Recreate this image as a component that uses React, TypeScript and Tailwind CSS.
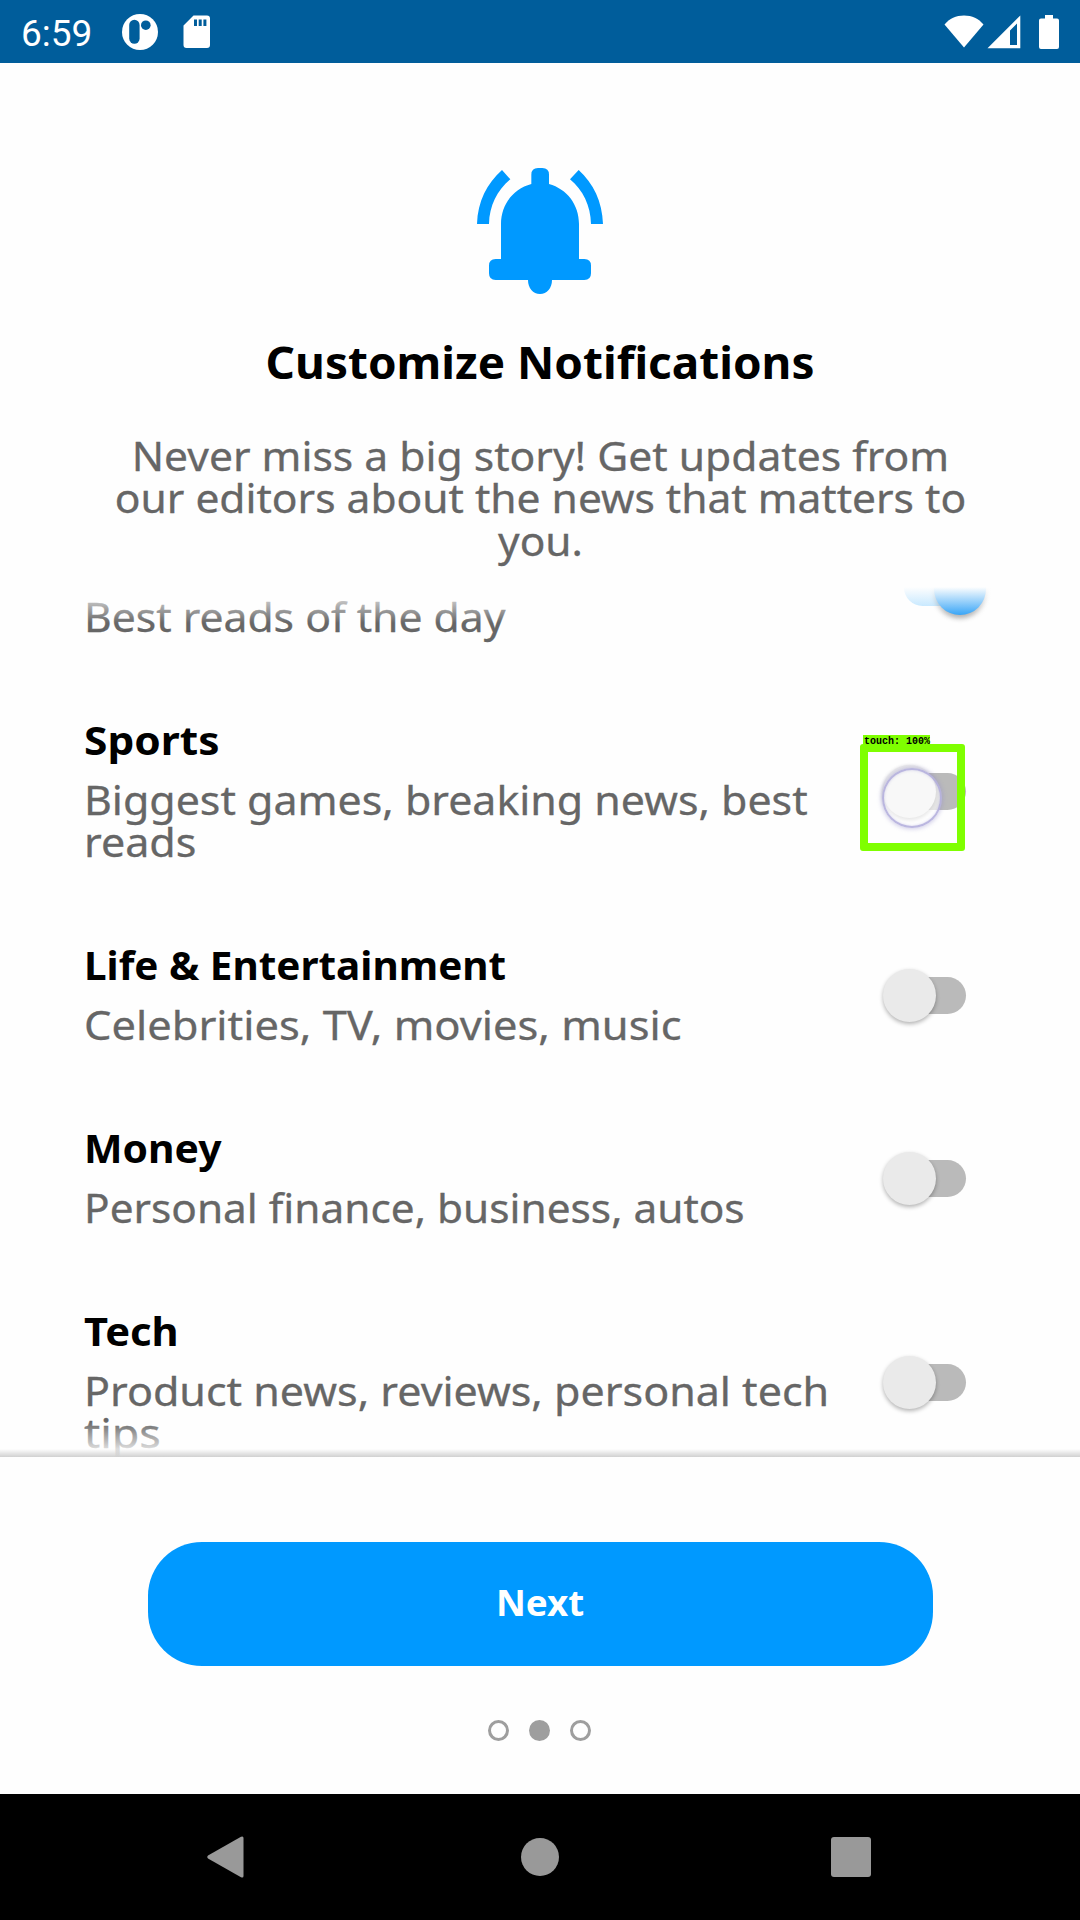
import React from "react";

type Topic = {
  title?: string;
  titleWidth?: string;
  lines: { text: string; width: string }[];
  on?: boolean;
  touched?: boolean;
};

const topics: Topic[] = [
  { lines: [{ text: "Best reads of the day", width: "scale-x-[1.066]" }], on: true },
  {
    title: "Sports",
    titleWidth: "scale-x-[1.062]",
    lines: [
      { text: "Biggest games, breaking news, best", width: "scale-x-[1.072]" },
      { text: "reads", width: "scale-x-[1.076]" },
    ],
    touched: true,
  },
  {
    title: "Life & Entertainment",
    titleWidth: "scale-x-[1.011]",
    lines: [{ text: "Celebrities, TV, movies, music", width: "scale-x-[1.086]" }],
  },
  {
    title: "Money",
    titleWidth: "scale-x-[1.021]",
    lines: [{ text: "Personal finance, business, autos", width: "scale-x-[1.059]" }],
  },
  {
    title: "Tech",
    titleWidth: "scale-x-[1.042]",
    lines: [
      { text: "Product news, reviews, personal tech", width: "scale-x-[1.075]" },
      { text: "tips", width: "scale-x-[1.120]" },
    ],
  },
];

function StatusBar() {
  return (
    <header className="flex h-[63px] shrink-0 items-center bg-[#005d9b] pl-[21px] pr-[21px] text-white">
      <span className="mt-[3px] font-['Roboto',sans-serif] text-[37px] leading-none">6:59</span>
      <svg className="ml-[30px]" width="36" height="36" viewBox="0 0 36 36">
        <circle cx="18" cy="18" r="18" fill="#fff" />
        <rect x="7.2" y="5.7" width="10.4" height="24" rx="5.2" fill="#005d9b" />
        <circle cx="23.8" cy="11.2" r="4.8" fill="#005d9b" />
      </svg>
      <svg className="ml-[25px]" width="28" height="34" viewBox="0 0 28 34">
        <path d="M10.5 0.5H24a3 3 0 0 1 3 3V30a3 3 0 0 1-3 3H3.500a3 3 0 0 1-3-3V10.500z" fill="#fff" />
        <path d="M11 4.500h3v6.500h-3zM15.700 4.500h3v6.500h-3zM20.400 4.500h3v6.500h-3z" fill="#005d9b" />
      </svg>
      <div className="ml-auto flex items-center">
        <svg width="40" height="34" viewBox="0 0 40 34">
          <path d="M0.500 9.500C5.500 3.500 12 0.500 20 0.500S34.500 3.500 39.500 9.500L20 32.500z" fill="#fff" />
        </svg>
        <svg className="ml-[3px]" width="34" height="34" viewBox="0 0 34 34">
          <path fillRule="evenodd" d="M0.500 33.300L33.300 0.500V33.300zM23 15.500V30H30V8.500z" fill="#fff" />
        </svg>
        <svg className="ml-[18px]" width="20" height="34" viewBox="0 0 20 34">
          <path d="M6 0H14V3.500H18a2 2 0 0 1 2 2V32a2 2 0 0 1-2 2H2a2 2 0 0 1-2-2V5.500a2 2 0 0 1 2-2H6z" fill="#fff" />
        </svg>
      </div>
    </header>
  );
}

function Bell() {
  return (
    <svg width="126" height="126" viewBox="111 84 378 378" fill="#0099ff">
      <path d="M274 132V104Q274 84 294 84H307Q327 84 327 104V132C381 147 417 194 417 252V357H433Q453 357 453 377V400Q453 420 433 420H336C336 444 321 462 300 462S264 444 264 420H167Q147 420 147 400V377Q147 357 167 357H183V252C183 194 219 147 274 132Z" />
      <path d="M186 90L211 118C172 150 148 198 147 252H111C113 185 141 130 186 90Z" />
      <path d="M416 90L390 118C429 150 452 198 453 252H489C487 185 460 130 416 90Z" />
    </svg>
  );
}

function TouchMarker() {
  return (
    <div className="absolute -left-[23px] -top-[21px] h-[107px] w-[105px] rounded-[3px] border-8 border-[#7fff00]">
      <div className="absolute -left-[5px] -top-[17px] h-[12px] w-[67px] whitespace-nowrap bg-[#7fff00] pl-px font-['Liberation_Mono',monospace] text-[10px] font-bold leading-[13px] text-black">
        touch: 100%
      </div>
      <div className="absolute left-[14px] top-[16px] size-[60px] rounded-full border-2 border-[#aaa5d8]/80 bg-white/65 shadow-[0_0_4px_1px_rgba(150,145,205,0.45),inset_0_0_3px_rgba(150,145,205,0.4)]" />
    </div>
  );
}

function Toggle({ on, touched }: { on?: boolean; touched?: boolean }) {
  return (
    <div className="relative mt-px flex h-[53px] w-[104px] shrink-0 items-center">
      <div className={on ? "ml-[21px] h-[37px] w-[62px] rounded-full bg-[#99d6ff]" : "ml-[21px] h-[37px] w-[62px] rounded-full bg-[#bababa]"} />
      <div
        className={
          on
            ? "absolute left-[51px] top-[2px] size-[52px] rounded-full bg-[#008cf5] shadow-[0_3px_5px_rgba(0,0,0,0.4)]"
            : "absolute left-0 top-0 size-[53px] rounded-full bg-[#eaeaea] shadow-[0_2px_4px_rgba(0,0,0,0.3)]"
        }
      />
      {touched && <TouchMarker />}
    </div>
  );
}

function TopicRow({ topic }: { topic: Topic }) {
  return (
    <div className="mb-[80.7px] flex shrink-0 items-center justify-between pl-[83px] pr-[93px]">
      <div className="whitespace-nowrap pl-px text-[40px] leading-[42.3px]">
        <h2 className={`mb-[17.7px] h-[42.3px] origin-left font-bold text-black ${topic.titleWidth ?? ""}`}>{topic.title}</h2>
        {topic.lines.map((l) => (
          <p key={l.text} className={`origin-left text-[#666] [-webkit-text-stroke:0.3px_#666] ${l.width}`}>{l.text}</p>
        ))}
      </div>
      <Toggle on={topic.on} touched={topic.touched} />
    </div>
  );
}

export default function App() {
  return (
    <div className="flex h-[1920px] w-[1080px] flex-col overflow-hidden bg-[#fefefe] font-['Noto_Sans',sans-serif]">
      <StatusBar />
      <section className="flex h-[524px] shrink-0 flex-col items-center pt-[105px]">
        <Bell />
        <h1 className="mt-[37.5px] scale-x-[1.02] whitespace-nowrap text-[45px] font-bold leading-[60px] text-black">
          Customize Notifications
        </h1>
        <div className="mt-[43.500px] whitespace-nowrap text-center text-[40px] leading-[42.3px] text-[#666] [-webkit-text-stroke:0.3px_#666]">
          <p className="scale-x-[1.065]">Never miss a big story! Get updates from</p>
          <p className="scale-x-[1.063]">our editors about the news that matters to</p>
          <p className="scale-x-[1.06]">you.</p>
        </div>
      </section>
      <main className="relative flex h-[870px] shrink-0 flex-col overflow-hidden">
        <div className="-mt-[51.2px] flex flex-col">
          {topics.map((t) => (
            <TopicRow key={t.lines[0].text} topic={t} />
          ))}
        </div>
        <div className="absolute inset-x-0 top-0 h-[36px] bg-linear-to-b from-[#fefefe] to-[#fefefe]/0" />
        <div className="absolute inset-x-0 bottom-0 h-[36px] bg-linear-to-t from-[#fefefe] to-[#fefefe]/0" />
        <div className="absolute inset-x-0 bottom-0 h-[8px] bg-linear-to-t from-black/18 to-black/0" />
      </main>
      <footer className="flex h-[337px] shrink-0 flex-col items-center pt-[85px]">
        <button className="flex h-[124px] w-[785px] items-center justify-center rounded-[54px] bg-[#0099ff] pb-px text-[35px] font-bold text-white">
          <span className="scale-x-[1.05]">Next</span>
        </button>
        <div className="mr-[2px] mt-[54px] flex gap-[20px]">
          <span className="size-[21px] rounded-full border-[3px] border-[#9e9e9e]" />
          <span className="size-[21px] rounded-full bg-[#9e9e9e]" />
          <span className="size-[21px] rounded-full border-[3px] border-[#9e9e9e]" />
        </div>
      </footer>
      <nav className="flex grow items-center justify-between bg-black pl-[206px] pr-[209px]">
        <svg width="38" height="44" viewBox="0 0 38 44">
          <path d="M35 1.800Q37.500 0.700 37.500 3V41Q37.500 43.300 35 42.200L2 23.500Q0.300 22 2 20.500z" fill="#999" />
        </svg>
        <span className="ml-[4px] size-[38px] rounded-full bg-[#999]" />
        <span className="size-[40px] rounded-[3px] bg-[#999]" />
      </nav>
    </div>
  );
}
